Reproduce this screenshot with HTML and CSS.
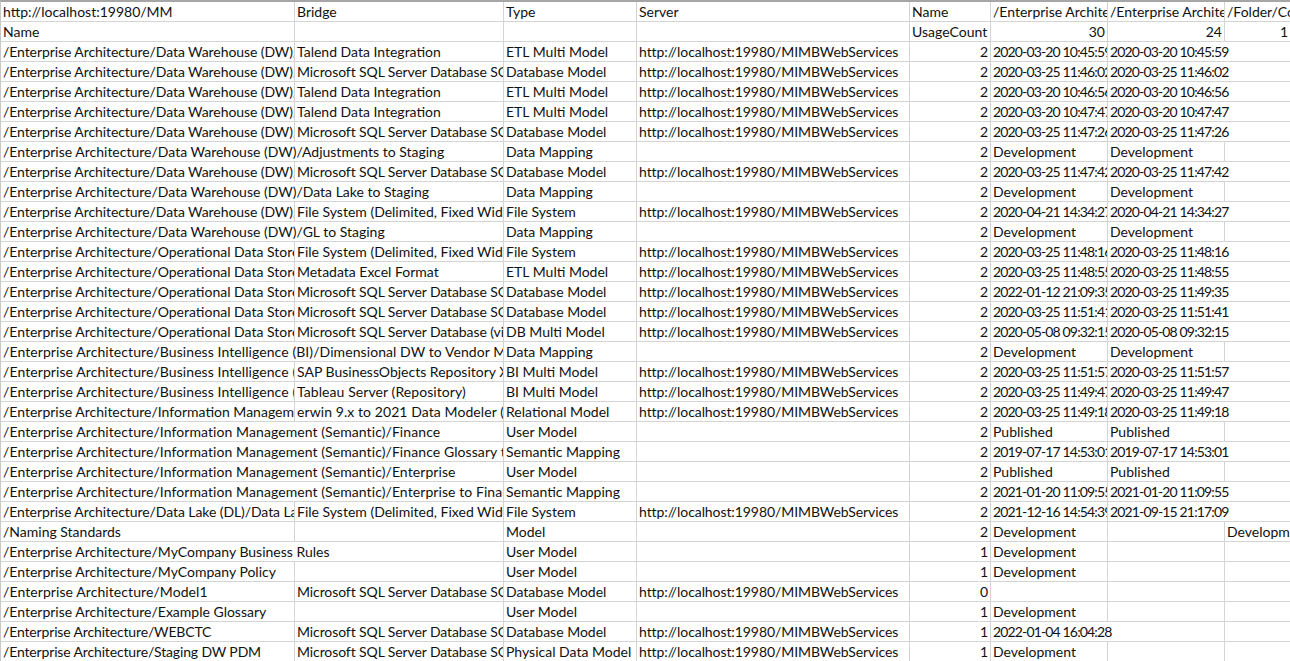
FILE: index.html
```html
<!DOCTYPE html>
<html lang="en">
<head>
<meta charset="utf-8">
<title>Sheet</title>
<link rel="stylesheet" href="styles.css">
</head>
<body>
<div class="sheet">
<div class="c">http://localhost:19980/MM</div><div class="c">Bridge</div><div class="c">Type</div><div class="c">Server</div><div class="c">Name</div><div class="c">/Enterprise Architecture</div><div class="c">/Enterprise Architecture</div><div class="c">/Folder/Contents</div>
<div class="c">Name</div><div class="c"></div><div class="c"></div><div class="c"></div><div class="c">UsageCount</div><div class="c n">30</div><div class="c n">24</div><div class="c n">1</div>

<div class="c dw">/Enterprise Architecture/Data Warehouse (DW)/Staging</div><div class="c">Talend Data Integration</div><div class="c">ETL Multi Model</div><div class="c u">http://localhost:19980/MIMBWebServices</div><div class="c n">2</div><div class="c d">2020-03-20 10:45:59</div><div class="c d s2">2020-03-20 10:45:59</div>
<div class="c dw">/Enterprise Architecture/Data Warehouse (DW)/Staging</div><div class="c m">Microsoft SQL Server Database SQL DDL</div><div class="c">Database Model</div><div class="c u">http://localhost:19980/MIMBWebServices</div><div class="c n">2</div><div class="c d">2020-03-25 11:46:02</div><div class="c d s2">2020-03-25 11:46:02</div>
<div class="c dw">/Enterprise Architecture/Data Warehouse (DW)/Staging</div><div class="c">Talend Data Integration</div><div class="c">ETL Multi Model</div><div class="c u">http://localhost:19980/MIMBWebServices</div><div class="c n">2</div><div class="c d">2020-03-20 10:46:56</div><div class="c d s2">2020-03-20 10:46:56</div>
<div class="c dw">/Enterprise Architecture/Data Warehouse (DW)/Staging</div><div class="c">Talend Data Integration</div><div class="c">ETL Multi Model</div><div class="c u">http://localhost:19980/MIMBWebServices</div><div class="c n">2</div><div class="c d">2020-03-20 10:47:47</div><div class="c d s2">2020-03-20 10:47:47</div>
<div class="c dw">/Enterprise Architecture/Data Warehouse (DW)/Staging</div><div class="c m">Microsoft SQL Server Database SQL DDL</div><div class="c">Database Model</div><div class="c u">http://localhost:19980/MIMBWebServices</div><div class="c n">2</div><div class="c d">2020-03-25 11:47:26</div><div class="c d s2">2020-03-25 11:47:26</div>
<div class="c s2">/Enterprise Architecture/Data Warehouse (DW)/Adjustments to Staging</div><div class="c">Data Mapping</div><div class="c"></div><div class="c n">2</div><div class="c">Development</div><div class="c">Development</div><div class="c"></div>
<div class="c dw">/Enterprise Architecture/Data Warehouse (DW)/Staging</div><div class="c m">Microsoft SQL Server Database SQL DDL</div><div class="c">Database Model</div><div class="c u">http://localhost:19980/MIMBWebServices</div><div class="c n">2</div><div class="c d">2020-03-25 11:47:42</div><div class="c d s2">2020-03-25 11:47:42</div>
<div class="c s2">/Enterprise Architecture/Data Warehouse (DW)/Data Lake to Staging</div><div class="c">Data Mapping</div><div class="c"></div><div class="c n">2</div><div class="c">Development</div><div class="c">Development</div><div class="c"></div>
<div class="c dw">/Enterprise Architecture/Data Warehouse (DW)/Staging</div><div class="c">File System (Delimited, Fixed Width, Excel)</div><div class="c">File System</div><div class="c u">http://localhost:19980/MIMBWebServices</div><div class="c n">2</div><div class="c d">2020-04-21 14:34:27</div><div class="c d s2">2020-04-21 14:34:27</div>
<div class="c s2">/Enterprise Architecture/Data Warehouse (DW)/GL to Staging</div><div class="c">Data Mapping</div><div class="c"></div><div class="c n">2</div><div class="c">Development</div><div class="c">Development</div><div class="c"></div>
<div class="c">/Enterprise Architecture/Operational Data Store</div><div class="c">File System (Delimited, Fixed Width, Excel)</div><div class="c">File System</div><div class="c u">http://localhost:19980/MIMBWebServices</div><div class="c n">2</div><div class="c d">2020-03-25 11:48:16</div><div class="c d s2">2020-03-25 11:48:16</div>
<div class="c">/Enterprise Architecture/Operational Data Store</div><div class="c">Metadata Excel Format</div><div class="c">ETL Multi Model</div><div class="c u">http://localhost:19980/MIMBWebServices</div><div class="c n">2</div><div class="c d">2020-03-25 11:48:55</div><div class="c d s2">2020-03-25 11:48:55</div>
<div class="c">/Enterprise Architecture/Operational Data Store</div><div class="c m">Microsoft SQL Server Database SQL DDL</div><div class="c">Database Model</div><div class="c u">http://localhost:19980/MIMBWebServices</div><div class="c n">2</div><div class="c d">2022-01-12 21:09:35</div><div class="c d s2">2020-03-25 11:49:35</div>
<div class="c">/Enterprise Architecture/Operational Data Store</div><div class="c m">Microsoft SQL Server Database SQL DDL</div><div class="c">Database Model</div><div class="c u">http://localhost:19980/MIMBWebServices</div><div class="c n">2</div><div class="c d">2020-03-25 11:51:41</div><div class="c d s2">2020-03-25 11:51:41</div>
<div class="c">/Enterprise Architecture/Operational Data Store</div><div class="c m">Microsoft SQL Server Database (via JDBC)</div><div class="c">DB Multi Model</div><div class="c u">http://localhost:19980/MIMBWebServices</div><div class="c n">2</div><div class="c d">2020-05-08 09:32:15</div><div class="c d s2">2020-05-08 09:32:15</div>
<div class="c s2 w">/Enterprise Architecture/Business Intelligence (BI)/Dimensional DW to Vendor Mart</div><div class="c">Data Mapping</div><div class="c"></div><div class="c n">2</div><div class="c">Development</div><div class="c">Development</div><div class="c"></div>
<div class="c w">/Enterprise Architecture/Business Intelligence (BI)</div><div class="c">SAP BusinessObjects Repository XI</div><div class="c">BI Multi Model</div><div class="c u">http://localhost:19980/MIMBWebServices</div><div class="c n">2</div><div class="c d">2020-03-25 11:51:57</div><div class="c d s2">2020-03-25 11:51:57</div>
<div class="c w">/Enterprise Architecture/Business Intelligence (BI)</div><div class="c w">Tableau Server (Repository)</div><div class="c">BI Multi Model</div><div class="c u">http://localhost:19980/MIMBWebServices</div><div class="c n">2</div><div class="c d">2020-03-25 11:49:47</div><div class="c d s2">2020-03-25 11:49:47</div>
<div class="c">/Enterprise Architecture/Information Management</div><div class="c w">erwin 9.x to 2021 Data Modeler (File)</div><div class="c">Relational Model</div><div class="c u">http://localhost:19980/MIMBWebServices</div><div class="c n">2</div><div class="c d">2020-03-25 11:49:18</div><div class="c d s2">2020-03-25 11:49:18</div>
<div class="c s2 w">/Enterprise Architecture/Information Management (Semantic)/Finance</div><div class="c">User Model</div><div class="c"></div><div class="c n">2</div><div class="c">Published</div><div class="c">Published</div><div class="c"></div>
<div class="c s2 w">/Enterprise Architecture/Information Management (Semantic)/Finance Glossary to Finance</div><div class="c">Semantic Mapping</div><div class="c"></div><div class="c n">2</div><div class="c d">2019-07-17 14:53:01</div><div class="c d s2">2019-07-17 14:53:01</div>
<div class="c s2 w">/Enterprise Architecture/Information Management (Semantic)/Enterprise</div><div class="c">User Model</div><div class="c"></div><div class="c n">2</div><div class="c">Published</div><div class="c">Published</div><div class="c"></div>
<div class="c s2 w">/Enterprise Architecture/Information Management (Semantic)/Enterprise to Finance</div><div class="c">Semantic Mapping</div><div class="c"></div><div class="c n">2</div><div class="c d">2021-01-20 11:09:55</div><div class="c d s2">2021-01-20 11:09:55</div>
<div class="c dw">/Enterprise Architecture/Data Lake (DL)/Data Lake</div><div class="c">File System (Delimited, Fixed Width, Excel)</div><div class="c">File System</div><div class="c u">http://localhost:19980/MIMBWebServices</div><div class="c n">2</div><div class="c d">2021-12-16 14:54:39</div><div class="c d s2">2021-09-15 21:17:09</div>
<div class="c">/Naming Standards</div><div class="c"></div><div class="c">Model</div><div class="c"></div><div class="c n">2</div><div class="c">Development</div><div class="c"></div><div class="c">Development</div>
<div class="c s2">/Enterprise Architecture/MyCompany Business Rules</div><div class="c">User Model</div><div class="c"></div><div class="c n">1</div><div class="c">Development</div><div class="c"></div><div class="c"></div>
<div class="c">/Enterprise Architecture/MyCompany Policy</div><div class="c"></div><div class="c">User Model</div><div class="c"></div><div class="c n">1</div><div class="c">Development</div><div class="c"></div><div class="c"></div>
<div class="c w">/Enterprise Architecture/Model1</div><div class="c m">Microsoft SQL Server Database SQL DDL</div><div class="c">Database Model</div><div class="c u">http://localhost:19980/MIMBWebServices</div><div class="c n">0</div><div class="c"></div><div class="c"></div><div class="c"></div>
<div class="c">/Enterprise Architecture/Example Glossary</div><div class="c"></div><div class="c">User Model</div><div class="c"></div><div class="c n">1</div><div class="c">Development</div><div class="c"></div><div class="c"></div>
<div class="c tight">/Enterprise Architecture/WEBCTC</div><div class="c m">Microsoft SQL Server Database SQL DDL</div><div class="c">Database Model</div><div class="c u">http://localhost:19980/MIMBWebServices</div><div class="c n">1</div><div class="c d s2">2022-01-04 16:04:28</div><div class="c"></div>
<div class="c tight">/Enterprise Architecture/Staging DW PDM</div><div class="c m">Microsoft SQL Server Database SQL DDL</div><div class="c">Physical Data Model</div><div class="c u">http://localhost:19980/MIMBWebServices</div><div class="c n">1</div><div class="c">Development</div><div class="c"></div><div class="c"></div>
</div>
</body>
</html>
```
FILE: styles.css
```css
html, body {
  margin: 0;
  padding: 0;
  background: #fff;
  overflow: hidden;
}

.sheet {
  display: grid;
  grid-template-columns: 294px 209px 133px 273px 81px 117px 117px 66px;
  grid-auto-rows: 20px;
  width: 1290px;
  border-top: 2px solid #a6a6a6;
  border-left: 1px solid #c8c8c8;
  font-family: Lato, "Open Sans", sans-serif;
  font-size: 14px;
  color: #111;
}

.c {
  box-sizing: border-box;
  height: 20px;
  padding: 0 0 0 2px;
  line-height: 20px;
  white-space: nowrap;
  overflow: hidden;
  border-right: 1px solid #d4d4d4;
  border-bottom: 1px solid #d4d4d4;
}

.n {
  padding: 0 2px 0 0;
  text-align: right;
}

.s2 {
  grid-column: span 2;
}

/* Calibri's digits are narrower than Lato's */
.d {
  letter-spacing: -0.85px;
}

.u {
  letter-spacing: -0.08px;
}

.m {
  letter-spacing: -0.1px;
}

.dw {
  letter-spacing: -0.08px;
}

.w {
  letter-spacing: 0.08px;
}

.tight {
  letter-spacing: -0.15px;
}
```
